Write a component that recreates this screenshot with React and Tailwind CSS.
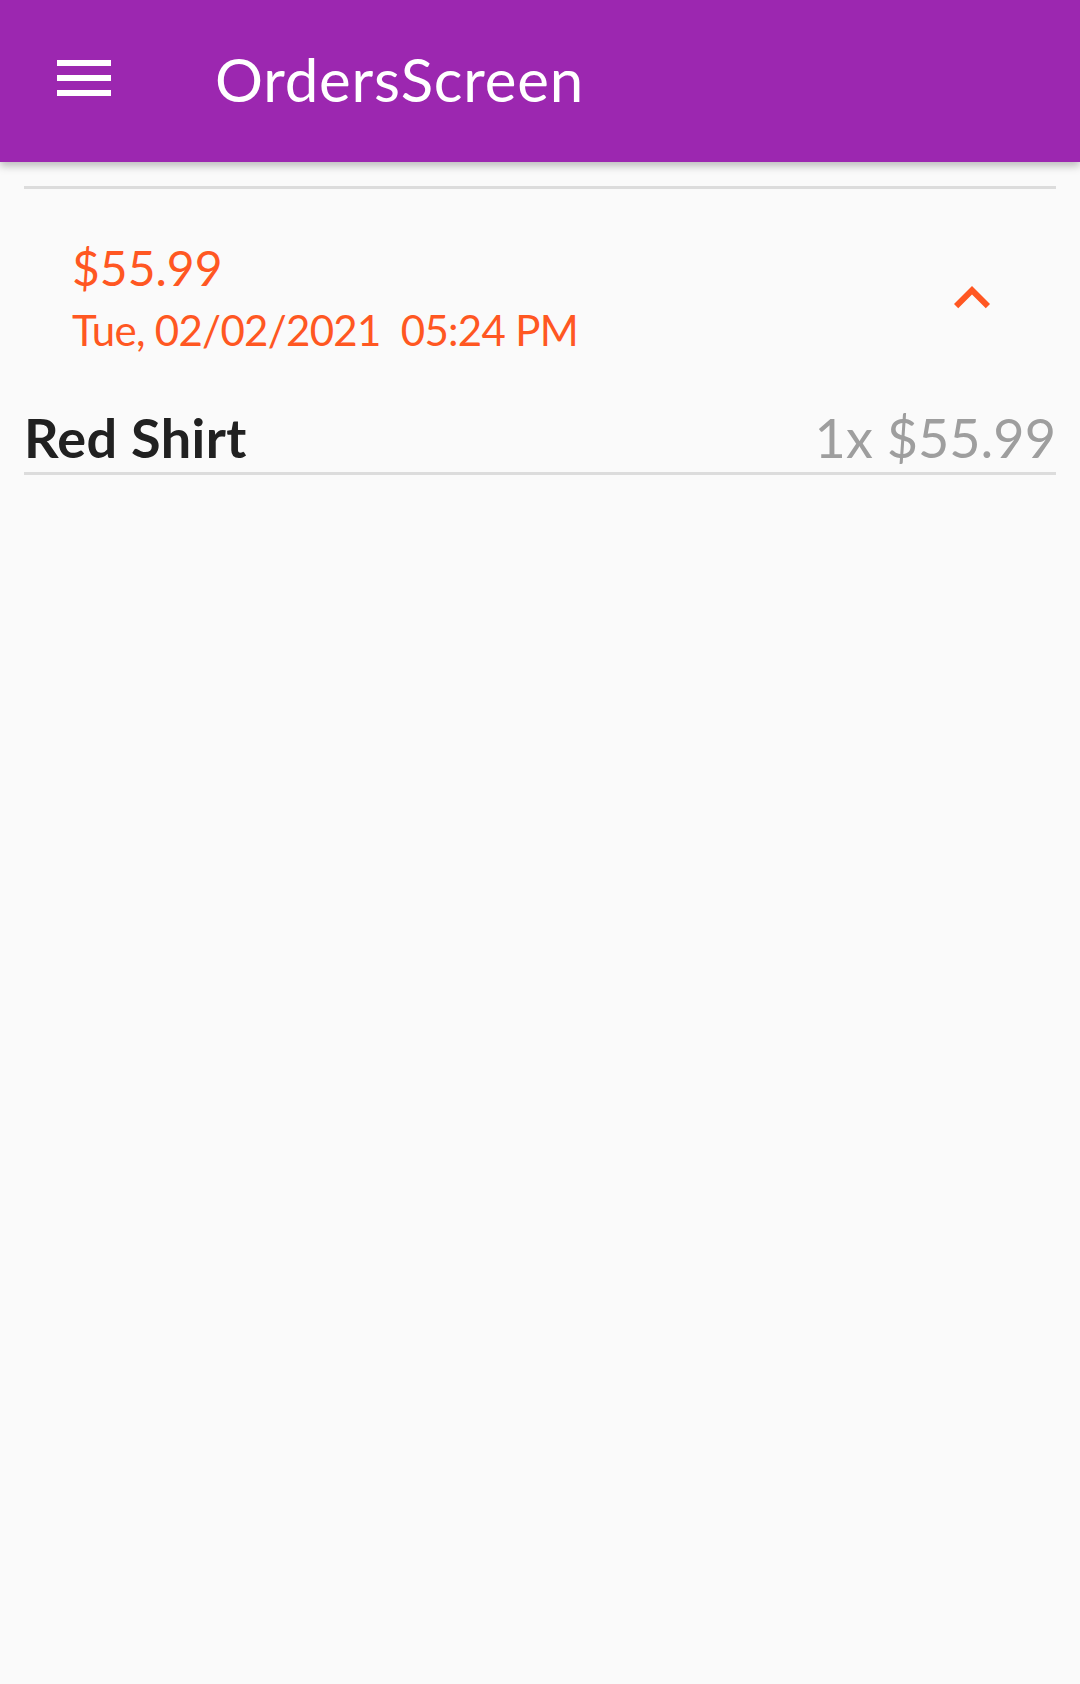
export default function App() {
  const order = {
    amount: 55.99,
    date: 'Tue, 02/02/2021  05:24 PM',
    items: [{ title: 'Red Shirt', quantity: 1, price: 55.99 }],
  };

  return (
    <div className="min-h-[1684px] w-[1080px] bg-[#fafafa] font-['Lato','Noto_Sans',sans-serif]">
      {/* app bar */}
      <div className="relative z-10 flex h-[162px] items-start bg-[#9c27b0] shadow-[0_4px_8px_rgba(0,0,0,0.25)]">
        <svg className="ml-[57px] mt-[60px]" width="54" height="36" viewBox="0 0 54 36" fill="#ffffff">
          <rect x="0" y="0" width="54" height="6" />
          <rect x="0" y="15" width="54" height="6" />
          <rect x="0" y="30" width="54" height="6" />
        </svg>
        <h1 className="ml-[104px] mt-[49px] text-[60px] leading-none tracking-[0.8px] text-white">OrdersScreen</h1>
      </div>

      {/* order card */}
      <div className="mx-[24px] mt-[24px] border-t-[3px] border-[#dcdcdc]">
        <div className="flex items-center pl-[48px] pr-[48px] pt-[55px]">
          <div className="flex-1">
            <div className="text-[48px] leading-none text-[#ff5722]">${order.amount.toFixed(2)}</div>
            <div className="mt-[17px] whitespace-pre text-[42px] leading-none tracking-[-0.7px] text-[#ff5722]">{order.date}</div>
          </div>
          <svg width="72" height="72" viewBox="0 0 24 24" fill="#ff5722">
            <path d="M12 8l-6 6 1.41 1.41L12 10.83l4.59 4.58L18 14z" />
          </svg>
        </div>

        <div className="mt-[60px] border-b-[3px] border-[#dcdcdc]">
          {order.items.map((item) => (
            <div key={item.title} className="flex items-start justify-between pb-[7px]">
              <span className="text-[54px] font-bold leading-none tracking-[0.4px] text-[#212121]">{item.title}</span>
              <span className="text-[54px] leading-none text-[#9e9e9e]">
                {item.quantity}x ${item.price.toFixed(2)}
              </span>
            </div>
          ))}
        </div>
      </div>
    </div>
  );
}
